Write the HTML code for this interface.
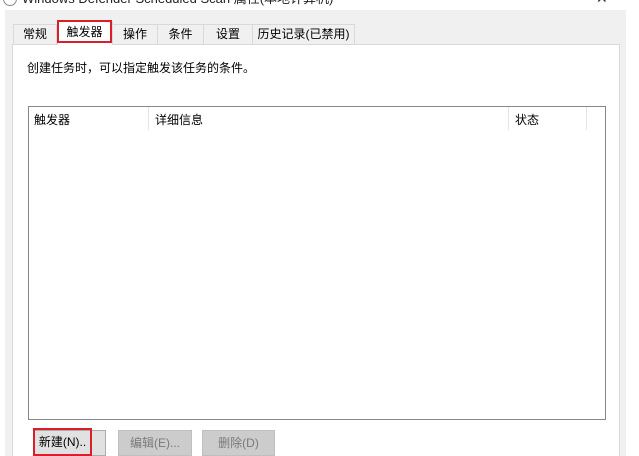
<html><head><style>
body{margin:0;width:639px;height:456px;background:#fff;position:relative;overflow:hidden;font-family:"Liberation Sans","Noto Sans CJK SC",sans-serif;font-size:12px;color:#000}
.a{position:absolute}
.tab{position:absolute;top:24px;height:20px;border:1px solid #d9d9d9;border-bottom:none;background:#f0f0f0;box-sizing:border-box;line-height:19px;text-align:center}
.btn{position:absolute;top:430px;height:26px;background:#e1e1e1;border:1px solid #adadad;box-sizing:border-box;line-height:24px;text-align:center}
</style></head><body>
<div class="a" style="top:-12px;font-size:13px;color:#222;left:22px">Windows Defender Scheduled Scan 属性(本地计算机)</div>
<div class="a" style="left:3px;top:-8px;width:12px;height:12px;border:1px solid #888;border-radius:50%"></div>
<div class="a" style="left:596px;top:-10px;font-size:14px;color:#333">✕</div>
<div class="a" style="left:5px;top:10px;width:621px;height:446px;background:#f0f0f0"></div>
<div class="tab" style="left:13px;width:44px">常规</div>
<div class="tab" style="left:112px;width:46px">操作</div>
<div class="tab" style="left:157px;width:47px">条件</div>
<div class="tab" style="left:203px;width:50px">设置</div>
<div class="tab" style="left:252px;width:103px">历史记录(已禁用)</div>
<div class="a" style="left:12px;top:44px;width:608px;height:412px;background:#fff;border:1px solid #d9d9d9;border-bottom:none;box-sizing:border-box"></div>
<div class="tab" style="left:57px;top:21px;width:56px;height:24px;background:#fff;border-color:#d9d9d9"></div>
<div class="a" style="left:57px;top:20px;width:55px;height:23px;border:2px solid #d9202a;box-sizing:border-box;text-align:center;line-height:20px">触发器</div>
<div class="a" style="left:27px;top:59px">创建任务时，可以指定触发该任务的条件。</div>
<div class="a" style="left:28px;top:106px;width:578px;height:314px;border:1px solid #828790;box-sizing:border-box"></div>
<div class="a" style="left:34px;top:111px">触发器</div>
<div class="a" style="left:155px;top:111px">详细信息</div>
<div class="a" style="left:515px;top:111px">状态</div>
<div class="a" style="left:148px;top:107px;width:1px;height:23px;background:#e5e5e5"></div>
<div class="a" style="left:508px;top:107px;width:1px;height:23px;background:#e5e5e5"></div>
<div class="a" style="left:586px;top:107px;width:1px;height:23px;background:#e5e5e5"></div>
<div class="btn" style="left:34px;width:72px"></div>
<div class="a" style="left:33px;top:428px;width:59px;height:28px;border:2px solid #d9202a;box-sizing:border-box;line-height:24px;text-align:center">新建(N)..</div>
<div class="btn" style="left:118px;width:74px;color:#7a7a7a;background:#ccc;border-color:#bfbfbf">编辑(E)...</div>
<div class="btn" style="left:202px;width:73px;color:#7a7a7a;background:#ccc;border-color:#bfbfbf">删除(D)</div>
</body></html>
